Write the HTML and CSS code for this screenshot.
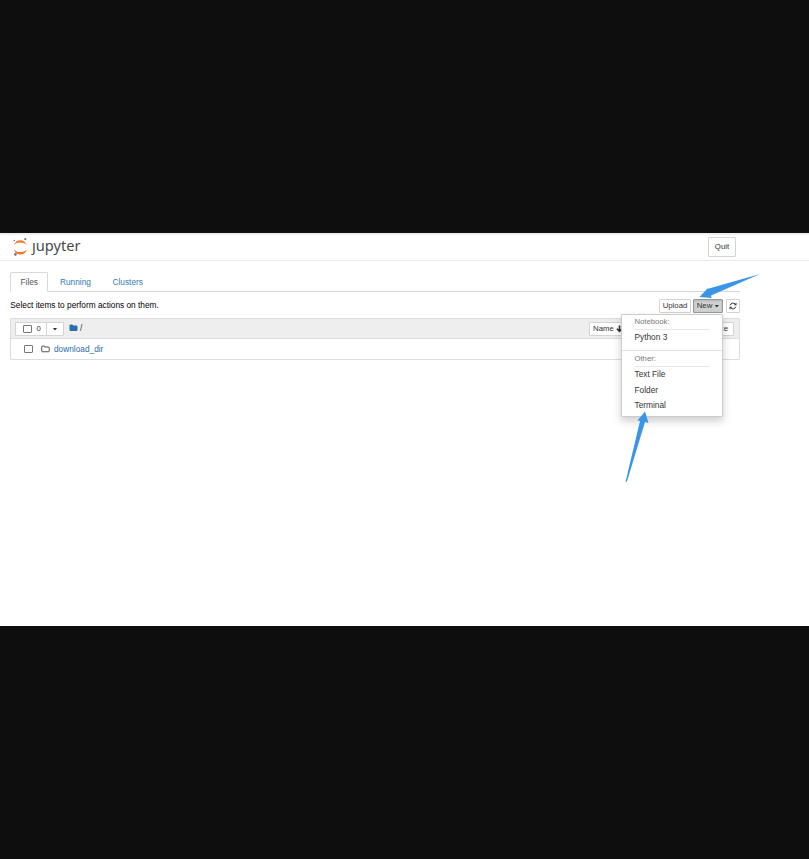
FILE: index.html
```
<!DOCTYPE html>
<html lang="en">
<head>
<meta charset="utf-8">
<title>Jupyter</title>
<link rel="stylesheet" href="styles.css">
</head>
<body>
<div class="screen">
  <header class="header">
    <div class="logo">
      <svg class="planet" width="18" height="20" viewBox="0 0 18 20">
        <path d="M2 8C3 4.700 5.400 3.200 8.300 3.200S13.600 4.700 14.600 8C13 6.300 10.800 5.600 8.300 5.600S3.600 6.300 2 8Z" fill="#f37726"/>
        <path d="M2 12.700C3 16 5.400 17.500 8.300 17.500S13.600 16 14.600 12.700C13 14.400 10.800 15.100 8.300 15.100S3.600 14.400 2 12.700Z" fill="#f37726"/>
        <circle cx="13.300" cy="2.200" r="1.100" fill="#767677"/>
        <circle cx="2.300" cy="3.500" r=".8" fill="#767677"/>
        <circle cx="3.400" cy="17.400" r="1.300" fill="#767677"/>
      </svg>
      <span class="wordmark"><span class="jay">j</span>upyter</span>
    </div>
    <button class="btn quit">Quit</button>
  </header>
  <main class="main">
    <nav class="tabs">
      <a class="tab active">Files</a><a class="tab running">Running</a><a class="tab clusters">Clusters</a>
    </nav>
    <div class="toolbar">
      <span class="hint">Select items to perform actions on them.</span>
      <div class="actions">
        <button class="btn upload">Upload</button>
        <div class="new-wrap">
          <button class="btn new">New<i class="caret"></i></button>
          <div class="menu">
            <div class="group">Notebook:</div>
            <a class="item">Python 3</a>
            <div class="divider"></div>
            <div class="group">Other:</div>
            <a class="item">Text File</a>
            <a class="item">Folder</a>
            <a class="item">Terminal</a>
          </div>
        </div>
        <button class="btn refresh"><svg width="8" height="8" viewBox="0 0 16 16"><path d="M2.500 6.500A5.800 5.800 0 0 1 12.500 4.200M13.500 9.500A5.800 5.800 0 0 1 3.500 11.800" fill="none" stroke="#333" stroke-width="2"/><path d="M15 1V6.500H9.500ZM1 15V9.500H6.500Z" fill="#333"/></svg></button>
      </div>
    </div>
    <div class="list">
      <div class="list-head">
        <div class="select">
          <span class="select-all"><i class="check"></i>0</span><span class="select-drop"><i class="caret"></i></span>
        </div>
        <svg class="folder" width="9" height="8" viewBox="0 0 18 16"><path d="M1 3Q1 1 3 1H6Q8 1 8 3H15Q17 3 17 5V12Q17 14 15 14H3Q1 14 1 12Z" fill="#296eaa"/></svg>
        <span class="slash">/</span>
        <div class="sorts">
          <button class="btn name">Name<svg width="7" height="8" viewBox="0 0 14 16"><path d="M7 1V13M1.800 7.500L7 12.800L12.200 7.500" fill="none" stroke="#333" stroke-width="3.200"/></svg></button>
          <button class="btn size">ze</button>
        </div>
      </div>
      <div class="row">
        <i class="check"></i>
        <svg class="folder-open" width="9" height="8" viewBox="0 0 18 16"><path d="M1.500 3.500Q1.500 2 3 2H6Q7.500 2 7.500 4H15Q16.500 4 16.500 5.500V12Q16.500 13.500 15 13.500H3Q1.500 13.500 1.500 12Z" fill="none" stroke="#333" stroke-width="1.700"/></svg>
        <a class="file">download_dir</a>
      </div>
    </div>
  </main>
  <svg class="arrows" width="809" height="393" viewBox="0 233 809 393">
    <path d="M760 274L709 288.500L707.500 288.500L699.500 297L711.500 298L711 295.500Z" fill="#3995e8"/>
    <path d="M645 411.500L648.500 423L645 422L627 481.500L625.500 482L640 421L637.500 420.500Z" fill="#3995e8"/>
  </svg>
</div>
</body>
</html>
```
FILE: styles.css
```
* { box-sizing: border-box; }
body {
  margin: 0;
  height: 859px;
  padding-top: 233px;
  overflow: hidden;
  background: #0e0e0e;
  font: 8.3px/12px "Liberation Sans", Arial, sans-serif;
  color: #000;
}
.screen {
  position: relative;
  height: 393px;
  background: #fff;
  border-top: 2px solid #eee;
}
.header {
  display: flex;
  justify-content: space-between;
  height: 26px;
  padding: 2px 73px 0 12px;
  border-bottom: 1px solid #e9e9e9;
}
.logo { display: flex; height: 20px; }
.wordmark {
  margin-left: 2px;
  font: 14.600px/17px "Noto Sans", "Open Sans", sans-serif;
  color: #4a4a4a;
}
.jay { display: inline-block; clip-path: inset(6px -1px -4px -4px); }
.btn {
  display: flex;
  align-items: center;
  justify-content: center;
  height: 14px;
  padding: 0;
  border: 1px solid #d4d4d4;
  border-radius: 1px;
  background: #fff;
  font: 7.800px/12px "Liberation Sans", Arial, sans-serif;
  color: #333;
  white-space: nowrap;
}
.quit { width: 28px; height: 20px; }
.main { width: 740px; padding: 11px 0 0 10px; }
.tabs { display: flex; height: 20px; border-bottom: 1px solid #d8d8d8; }
.tab { padding-top: 4px; color: #337ab7; }
.tab.active {
  width: 38px;
  height: 20px;
  padding: 3px 0 0 9.500px;
  border: 1px solid #d8d8d8;
  border-bottom-color: #fff;
  border-radius: 2px 2px 0 0;
  background: #fff;
  color: #555;
}
.running { margin-left: 12px; width: 52.500px; }
.toolbar { display: flex; justify-content: space-between; height: 26px; padding-top: 7px; }
.hint { margin-left: .3px; }
.actions { display: flex; }
.upload { width: 32px; margin-right: 2px; }
.new-wrap { position: relative; margin-right: 3px; }
.new {
  width: 30px;
  background: #d0d0d0;
  border-color: #999;
  box-shadow: inset 0 1px 2px #0002;
}
.refresh { width: 14px; }
.caret {
  border: 2.500px solid transparent;
  border-width: 3px 2.500px 0;
  border-top-color: #333;
}
.select-drop .caret, .new .caret {
  width: 5px;
  height: 3px;
  border: 0;
  background: #333;
  clip-path: polygon(0 0, 100% 0, 50% 100%);
}
.new .caret { margin-left: 2px; }
.menu {
  position: absolute;
  z-index: 2;
  top: 15px;
  right: 0;
  width: 102px;
  height: 103px;
  border: 1px solid #ccc;
  border-radius: 1px;
  background: #fff;
  box-shadow: 0 4px 8px #0003;
}
.group {
  height: 15px;
  margin: 0 12.500px;
  border-bottom: 1px solid #e8e8e8;
  font-size: 7.7px;
  line-height: 13px;
  color: #777;
}
.item { display: block; height: 15.400px; padding-left: 12.500px; line-height: 15.400px; color: #333; }
.divider { height: 1px; margin: 5px 0 1px; background: #e0e0e0; }
.list { border: 1px solid #ddd; border-radius: 1px; }
.list-head { display: flex; height: 20px; padding: 3px 5px 0 4px; background: #eee; border-bottom: 1px solid #ddd; }
.select { display: flex; width: 49px; height: 14px; border: 1px solid #d4d4d4; border-radius: 1px; background: #fff; font-size: 7.7px; color: #333; }
.select-all { display: flex; align-items: center; width: 31px; padding-left: 7px; gap: 4.500px; border-right: 1px solid #d4d4d4; }
.select-drop { display: flex; flex: 1; align-items: center; justify-content: center; }
.check { width: 9px; height: 8px; border: 1px solid #777; border-radius: 1px; background: #fff; }
.folder { margin: 2px 0 0 5px; }
.slash { margin-left: 2px; color: #333; }
.sorts { display: flex; justify-content: space-between; width: 145px; margin-left: auto; }
.name { width: 38px; }
.name svg { margin-left: 2px; }
.size { width: 37px; justify-content: flex-end; padding-right: 5px; }
.row { display: flex; align-items: center; height: 20px; padding-left: 13px; }
.folder-open { margin-left: 8px; }
.file { margin-left: 4px; color: #296eaa; }
.arrows { position: absolute; z-index: 3; top: -2px; left: 0; }
```
